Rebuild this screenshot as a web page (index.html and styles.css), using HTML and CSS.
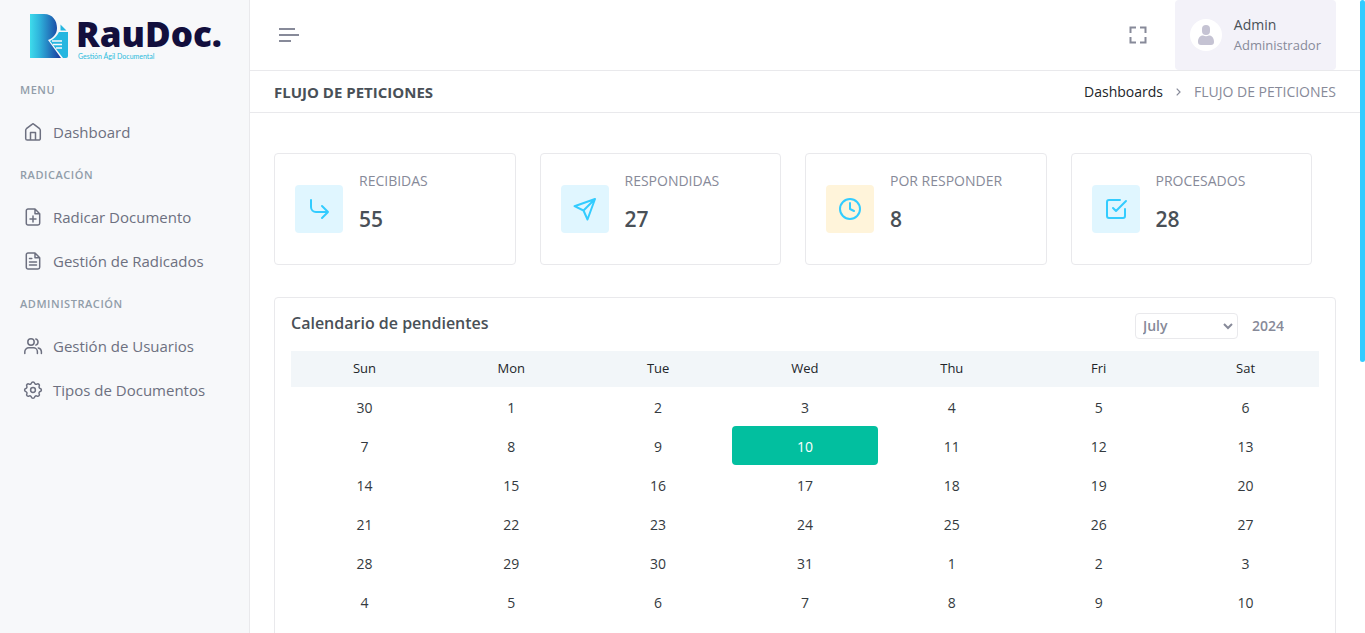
FILE: index.html
```html
<!DOCTYPE html>
<html lang="es">
<head>
<meta charset="utf-8">
<meta name="viewport" content="width=device-width, initial-scale=1">
<title>RauDoc</title>
<link rel="stylesheet" href="styles.css">
</head>
<body>
<div class="shell">
  <aside class="sidebar">
    <a class="logo" href="#">
      <svg class="logo-mark" viewBox="0 0 39 45" aria-hidden="true">
        <defs><linearGradient id="mark" x1="0" x2="1"><stop offset="0" stop-color="#3edcec"/><stop offset=".3" stop-color="#2fb4dc"/><stop offset="1" stop-color="#17379c"/></linearGradient></defs>
        <path fill="url(#mark)" d="M0 0h14C23 0 27 7 27 14c0 6-4 10-9 12l13 18H0z"/>
        <path fill="#25b6e0" d="M30.500 10.500l6 6h-6zM29 18h9v24q0 2-2 2h-3L20 27c4-2 7-5 9-9z"/>
        <path stroke="#f7f8fa" stroke-width="1.300" d="M22 27h10M23 30.500h9M26 34h6"/>
      </svg>
      <span class="logo-text"><span class="logo-name">RauDoc.</span><span class="logo-tag">Gestión Ágil Documental</span></span>
    </a>
    <nav class="menu">
      <h2 class="menu-title">MENU</h2>
      <a class="menu-link" href="#"><svg class="icon" viewBox="0 0 20 20"><path d="M2.700 8.200v8.300a1.600 1.600 0 0 0 1.600 1.600h11.400a1.600 1.600 0 0 0 1.600-1.600V8.200a2 2 0 0 0-.7-1.500L11 2.300a1.500 1.500 0 0 0-2 0L3.400 6.700a2 2 0 0 0-.7 1.500zM7.500 18v-7.500h5V18"/></svg>Dashboard</a>
      <h2 class="menu-title">RADICACIÓN</h2>
      <a class="menu-link" href="#"><svg class="icon" viewBox="0 0 20 20"><path d="M12 2H5a1.700 1.700 0 0 0-1.700 1.700v12.600A1.700 1.700 0 0 0 5 18h10a1.700 1.700 0 0 0 1.700-1.700V6.700zM12 2v4.700h4.700M10 9v6M7 12h6"/></svg>Radicar Documento</a>
      <a class="menu-link" href="#"><svg class="icon" viewBox="0 0 20 20"><path d="M12 2H5a1.700 1.700 0 0 0-1.700 1.700v12.600A1.700 1.700 0 0 0 5 18h10a1.700 1.700 0 0 0 1.700-1.700V6.700zM12 2v4.700h4.700M6.500 7.500h2.300M6.500 11h7M6.500 14h7"/></svg>Gestión de Radicados</a>
      <h2 class="menu-title">ADMINISTRACIÓN</h2>
      <a class="menu-link" href="#"><svg class="icon" viewBox="0 0 20 20"><circle cx="8" cy="6" r="3.200"/><path d="M1.800 17.500v-1.700a4 4 0 0 1 4-4h4.600a4 4 0 0 1 4 4v1.700M12.800 3a3.200 3.200 0 0 1 0 6.100M15.200 11.900a4 4 0 0 1 3.200 3.900v1.700"/></svg>Gestión de Usuarios</a>
      <a class="menu-link" href="#"><svg class="icon" viewBox="0 0 20 20"><circle cx="10" cy="10" r="2.400"/><path d="M8.400 3.100c.4-1.500 2.800-1.500 3.200 0a1.600 1.600 0 0 0 2.400 1c1.400-.8 3 .8 2.200 2.200a1.600 1.600 0 0 0 1 2.200c1.600.4 1.600 2.700 0 3.100a1.600 1.600 0 0 0-1 2.300c.8 1.400-.8 3-2.200 2.200a1.600 1.600 0 0 0-2.400 1c-.4 1.600-2.800 1.600-3.200 0a1.600 1.600 0 0 0-2.400-1c-1.400.8-3-.8-2.200-2.200a1.600 1.600 0 0 0-1-2.300c-1.600-.4-1.600-2.700 0-3.100a1.600 1.600 0 0 0 1-2.200c-.8-1.400.8-3 2.200-2.200a1.600 1.600 0 0 0 2.400-1z"/></svg>Tipos de Documentos</a>
    </nav>
  </aside>

  <div class="content">
    <header class="topbar">
      <button class="icon-button" type="button" aria-label="Menú"><svg width="20" height="14" viewBox="0 0 20 14"><path d="M0 1h16M0 7h20M0 13h12" stroke="currentColor" stroke-width="2"/></svg></button>
      <div class="topbar-right">
        <button class="icon-button" type="button" aria-label="Pantalla completa"><svg width="18" height="18" viewBox="0 0 18 18"><path d="M1.500 7V1.500H7M11 1.500h5.500V7M16.500 11v5.500H11M7 16.500H1.500V11" fill="none" stroke="currentColor" stroke-width="2"/></svg></button>
        <button class="user" type="button">
          <svg class="avatar" viewBox="0 0 32 32" aria-hidden="true"><circle cx="16" cy="16" r="16" fill="#fff"/><rect x="12" y="6" width="8" height="10" rx="4" fill="#c5c3d3"/><path fill="#c5c3d3" d="M8 23c0-4 2-6.500 5-6.500q3 1.500 6 0c3 0 5 2.500 5 6.500 0 2-1 3-3 3H11c-2 0-3-1-3-3z"/></svg>
          <span class="user-text"><span class="user-name">Admin</span><span class="user-role">Administrador</span></span>
        </button>
      </div>
    </header>

    <div class="titlebar">
      <h1 class="page-title">FLUJO DE PETICIONES</h1>
      <nav class="crumbs"><a class="crumb-link" href="#">Dashboards</a><svg class="crumb-arrow" width="5" height="8" viewBox="0 0 5 8"><path d="M.7.7L4 4 .7 7.300" fill="none" stroke="currentColor" stroke-width="1.200"/></svg><span>FLUJO DE PETICIONES</span></nav>
    </div>

    <main class="page">
      <section class="stats">
        <article class="stat"><span class="stat-icon"><svg class="stat-svg" viewBox="0 0 24 24"><path d="M4 3v7a5 5 0 0 0 5 5h12M15 9l6 6-6 6"/></svg></span><div><p class="stat-label">RECIBIDAS</p><p class="stat-value">55</p></div></article>
        <article class="stat"><span class="stat-icon"><svg class="stat-svg" viewBox="0 0 24 24"><path d="M22 2L1.500 9.200l9 4.300 4 9zM22 2L10.500 13.500"/></svg></span><div><p class="stat-label">RESPONDIDAS</p><p class="stat-value">27</p></div></article>
        <article class="stat"><span class="stat-icon stat-icon-warning"><svg class="stat-svg" viewBox="0 0 24 24"><circle cx="12" cy="12" r="10"/><path d="M12 6v6l4 2"/></svg></span><div><p class="stat-label">POR RESPONDER</p><p class="stat-value">8</p></div></article>
        <article class="stat"><span class="stat-icon"><svg class="stat-svg" viewBox="0 0 24 24"><path d="M9 11l3 3L22 4M21 12v7a2 2 0 0 1-2 2H5a2 2 0 0 1-2-2V5a2 2 0 0 1 2-2h11"/></svg></span><div><p class="stat-label">PROCESADOS</p><p class="stat-value">28</p></div></article>
      </section>

      <section class="card">
        <div class="card-head">
          <h2 class="card-title">Calendario de pendientes</h2>
          <div class="period">
            <span class="select-wrap"><select class="month" aria-label="Mes"><option>July</option></select><svg class="chevron" width="10" height="7" viewBox="0 0 10 7"><path d="M1 1l4 4 4-4" fill="none" stroke="currentColor" stroke-width="2"/></svg></span>
            <input class="year" type="text" value="2024" aria-label="Año">
          </div>
        </div>
        <table class="calendar">
          <thead><tr><th>Sun</th><th>Mon</th><th>Tue</th><th>Wed</th><th>Thu</th><th>Fri</th><th>Sat</th></tr></thead>
          <tbody>
            <tr><td>30</td><td>1</td><td>2</td><td>3</td><td>4</td><td>5</td><td>6</td></tr>
            <tr><td>7</td><td>8</td><td>9</td><td class="today">10</td><td>11</td><td>12</td><td>13</td></tr>
            <tr><td>14</td><td>15</td><td>16</td><td>17</td><td>18</td><td>19</td><td>20</td></tr>
            <tr><td>21</td><td>22</td><td>23</td><td>24</td><td>25</td><td>26</td><td>27</td></tr>
            <tr><td>28</td><td>29</td><td>30</td><td>31</td><td>1</td><td>2</td><td>3</td></tr>
            <tr><td>4</td><td>5</td><td>6</td><td>7</td><td>8</td><td>9</td><td>10</td></tr>
          </tbody>
        </table>
      </section>
    </main>
  </div>
  <div class="scroll-rail"><div class="scroll-thumb"></div></div>
</div>
</body>
</html>
```
FILE: styles.css
```css
* { box-sizing: border-box; }
body, h1, h2, p { margin: 0; }
body {
  font-family: "Open Sans", "Noto Sans", sans-serif;
  font-size: 14px;
  line-height: 20px;
  color: #495057;
  background: #fff;
}
a { color: inherit; text-decoration: none; }
button, input, select { font: inherit; color: inherit; }
button { border: 0; background: none; padding: 0; }

.shell { display: flex; height: 100vh; overflow: hidden; }
.sidebar { flex: 0 0 250px; background: #f7f8fa; border-right: 1px solid #e9e9ec; }
.logo { display: flex; gap: 7px; height: 69px; padding: 14px 0 0 30px; }
.logo-mark { width: 39px; height: 45px; }
.logo-text { display: flex; flex-direction: column; padding-top: 2px; color: #120f3d; }
.logo-name { font-size: 35px; line-height: 36px; font-weight: 800; }
.logo-tag { padding-left: 2px; font: 400 7px/8px "Lato", sans-serif; color: #2bbbdc; }
.menu-title { height: 41px; padding-left: 20px; line-height: 41px; font-size: 11px; font-weight: 600; letter-spacing: .05em; color: #919da9; }
.menu-link { display: flex; align-items: center; gap: 10px; height: 44px; padding-left: 23px; font-size: 15px; color: #6d7080; }
.icon { width: 20px; height: 20px; fill: none; stroke: currentColor; stroke-width: 1.5; stroke-linecap: round; stroke-linejoin: round; }

.content { flex: 1; min-width: 0; }
.topbar { display: flex; align-items: center; justify-content: space-between; height: 71px; padding: 0 24px 0 29px; border-bottom: 1px solid #e9e9ec; }
.topbar-right { display: flex; align-items: center; gap: 28px; }
.icon-button { display: flex; color: #878a99; }
.user { display: flex; align-items: center; gap: 12px; height: 70px; padding: 0 15px; background: #f3f2f9; border-radius: 4px; text-align: left; }
.avatar { width: 32px; height: 32px; }
.user-text { display: flex; flex-direction: column; }
.user-name { font-size: 14px; }
.user-role { font-size: 13px; color: #878a99; }
.titlebar { display: flex; align-items: center; justify-content: space-between; height: 42px; padding: 0 24px; border-bottom: 1px solid #e9e9ec; }
.page-title { font-size: 15px; font-weight: 700; }
.crumbs { display: flex; align-items: center; gap: 13px; color: #878a99; }
.crumb-link { color: #212529; }

.page { padding: 40px 24px 0; }
.stats { display: grid; grid-template-columns: repeat(4, 1fr); gap: 24px; margin-right: 24px; }
.stat { display: flex; align-items: center; gap: 16px; height: 112px; padding: 0 20px; border: 1px solid #e9e9ec; border-radius: 4px; }
.stat-icon { display: flex; align-items: center; justify-content: center; width: 48px; height: 48px; border-radius: 4px; background: #e0f6ff; color: #33ccff; }
.stat-icon-warning { background: #fff4da; }
.stat-svg { width: 24px; height: 24px; fill: none; stroke: currentColor; stroke-width: 2; stroke-linecap: round; stroke-linejoin: round; }
.stat-label { color: #878a99; margin-bottom: 12px; }
.stat-value { font-size: 21px; line-height: 32px; font-weight: 600; margin-bottom: 12px; }

.card { margin-top: 32px; padding: 15px 16px 48px; border: 1px solid #e9e9ec; border-radius: 4px; }
.card-head { display: flex; justify-content: space-between; height: 38px; }
.card-title { font-size: 16px; font-weight: 600; }
.period { display: flex; gap: 14px; padding-right: 35px; font-weight: 600; color: #878a99; }
.select-wrap { position: relative; height: 26px; }
.month { appearance: none; width: 103px; height: 26px; padding: 0 7px; border: 1px solid #e9e9ec; border-radius: 4px; background: #fff; }
.chevron { position: absolute; right: 5px; top: 10px; pointer-events: none; }
.year { width: 32px; height: 26px; padding: 0 0 2px; border: 0; background: none; }
.calendar { width: 100%; table-layout: fixed; border-collapse: collapse; text-align: center; }
.calendar th { height: 36px; padding: 0 0 2px; font-size: 13px; font-weight: 400; color: #212529; background: #f2f6f9; }
.calendar td { height: 39px; padding: 2px 0 0; color: #343a40; }
.calendar .today { background: #02bf9f; border-radius: 4px; color: #fff; }

.scroll-rail { flex: 0 0 5px; }
.scroll-thumb { height: 362px; border-radius: 3px; background: #33ccff; }
```
